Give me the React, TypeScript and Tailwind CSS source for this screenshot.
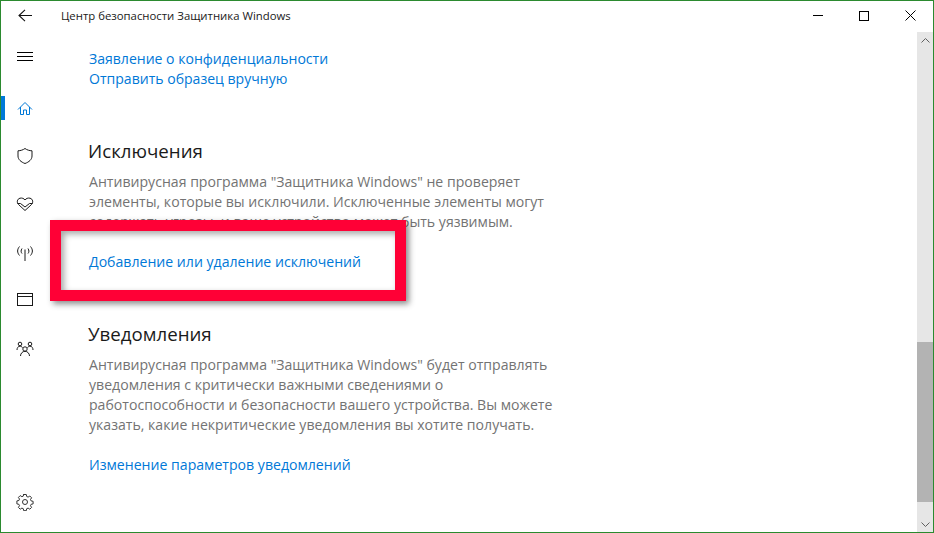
const FONT = "font-['Open_Sans','Noto_Sans',sans-serif]";

function NavIcon({ children, active }: { children: React.ReactNode; active?: boolean }) {
  return (
    <div className="relative flex h-12 w-12 items-center justify-center">
      {active && <div className="absolute left-0 top-1/2 h-[24px] w-1 -translate-y-1/2 bg-[#0078d7]" />}
      <svg
        width="18"
        height="18"
        viewBox="0 0 18 18"
        fill="none"
        stroke={active ? "#0078d7" : "#1a1a1a"}
        strokeWidth="1"
      >
        {children}
      </svg>
    </div>
  );
}

function Section({
  title,
  text,
  link,
}: {
  title: string;
  text: string[];
  link: string;
}) {
  return (
    <section>
      <h2 className="-ml-[1px] text-[18.7px] leading-[26px] text-[#1a1a1a]">{title}</h2>
      <div className="mt-[8px] text-[14.1px] leading-[20px] text-[#737373]">
        {text.map((line) => (
          <p key={line} className="whitespace-nowrap">{line}</p>
        ))}
      </div>
      <a className="mt-[20px] block whitespace-nowrap text-[14.1px] leading-[20px] text-[#0078d7]">{link}</a>
    </section>
  );
}

export default function App() {
  return (
    <div className={`${FONT} relative flex h-[533px] w-[934px] flex-col overflow-hidden border border-[#2b8a2f] bg-white`}>
      {/* Title bar */}
      <header className="flex h-[31px] shrink-0 items-center pb-[2px] text-[#1a1a1a]">
        <div className="flex w-[48px] justify-center">
          <svg width="14" height="13" viewBox="0 0 14 13" fill="none" stroke="#111" strokeWidth="1.1">
            <path d="M7 .8 1 6.5l6 5.700M1 6.500h13" />
          </svg>
        </div>
        <span className="ml-[12px] text-[11.35px]">Центр безопасности Защитника Windows</span>
        <div className="ml-auto flex items-center">
          <div className="flex w-[46px] justify-center">
            <div className="h-px w-[10px] bg-black" />
          </div>
          <div className="flex w-[46px] justify-center">
            <div className="h-[10px] w-[10px] border border-black" />
          </div>
          <div className="flex w-[46px] justify-center">
            <svg width="11" height="11" viewBox="0 0 11 11" stroke="#000" strokeWidth="1">
              <path d="m.5.5 10 10M10.500.5l-10 10" />
            </svg>
          </div>
        </div>
      </header>

      <div className="flex min-h-0 flex-1">
        {/* Navigation rail */}
        <nav className="flex w-[48px] shrink-0 flex-col">
          <div className="flex h-[48px] items-center justify-center">
            <div className="flex w-[16px] flex-col gap-[3px]">
              <div className="h-px bg-black" />
              <div className="h-px bg-black" />
              <div className="h-px bg-black" />
            </div>
          </div>
          <div className="h-[4px]" />
          <NavIcon active>
            <path d="M2 10.500 9 3.500l7 7M4.500 8v7.500h3V11h3v4.500h3V8" />
          </NavIcon>
          <NavIcon>
            <path d="M9 1.500c2 1.500 4.500 2.200 7 2.300V9c0 3.500-3 6-7 7.500C5 15 2 12.500 2 9V3.800c2.500-.1 5-.8 7-2.300Z" />
          </NavIcon>
          <NavIcon>
            <path d="M9 15.500 2.500 9.500C.5 7.500 1 4 4 3.200 6 2.700 8 3.500 9 5c1-1.500 3-2.300 5-1.800 3 .8 3.500 4.300 1.500 6.300L9 15.500Z" />
            <path d="M1.500 8.500h3L9 12l4.500-3.500h3" />
          </NavIcon>
          <NavIcon>
            <path d="M9 6.500V18M3.500 3.500c-2.500 3-2.500 6 0 9M14.500 3.500c2.500 3 2.500 6 0 9M6 5.500c-1.200 2-1.200 3.500 0 5M12 5.500c1.200 2 1.200 3.500 0 5" />
          </NavIcon>
          <NavIcon>
            <rect x="1.500" y="2.500" width="15" height="12" />
            <path d="M1.500 5.500h15" />
          </NavIcon>
          <NavIcon>
            <circle cx="9" cy="10" r="2.200" />
            <circle cx="4" cy="5" r="1.800" />
            <circle cx="14" cy="5" r="1.800" />
            <path d="M4.500 17c0-2.500 2-4.700 4.500-4.700s4.500 2.200 4.500 4.700M1 11c0-2 1-3.800 3-3.800 1 0 2 .5 2.500 1.500M17 11c0-2-1-3.800-3-3.800-1 0-2 .5-2.500 1.500" />
          </NavIcon>
          <div className="mt-auto flex h-[48px] items-center justify-center pb-[12px]">
            <svg width="18" height="18" viewBox="0 0 18 18" fill="none" stroke="#333" strokeWidth="1">
              <circle cx="9" cy="9" r="2.500" />
              <path d="M7.700 1.500h2.600l.4 2 1.400.6 1.700-1.100 1.800 1.800-1.100 1.700.6 1.400 2 .4v2.600l-2 .4-.6 1.400 1.100 1.700-1.800 1.800-1.700-1.100-1.400.6-.4 2H7.700l-.4-2-1.400-.6-1.700 1.100-1.800-1.800 1.100-1.700-.6-1.400-2-.4V7.900l2-.4.6-1.400L2.400 4.400l1.800-1.800 1.700 1.100 1.400-.6.4-2Z" />
            </svg>
          </div>
        </nav>

        {/* Scrolled page content */}
        <main className="flex min-w-0 flex-1 flex-col pl-[40px] pt-[17px]">
          <a className="whitespace-nowrap text-[14.050px] leading-[20px] text-[#0078d7]">Заявление о конфиденциальности</a>
          <a className="whitespace-nowrap text-[14.050px] leading-[20px] text-[#0078d7]">Отправить образец вручную</a>
          <div className="mt-[49px] flex flex-col gap-[49px]">
            <Section
              title="Исключения"
              text={[
                'Антивирусная программа "Защитника Windows" не проверяет',
                "элементы, которые вы исключили. Исключенные элементы могут",
                "содержать угрозы, и ваше устройство может быть уязвимым.",
              ]}
              link="Добавление или удаление исключений"
            />
            <Section
              title="Уведомления"
              text={[
                'Антивирусная программа "Защитника Windows" будет отправлять',
                "уведомления с критически важными сведениями о",
                "работоспособности и безопасности вашего устройства. Вы можете",
                "указать, какие некритические уведомления вы хотите получать.",
              ]}
              link="Изменение параметров уведомлений"
            />
          </div>
        </main>

        {/* Scrollbar */}
        <div className="flex w-[16px] shrink-0 flex-col bg-[#e6e6e6]">
          <div className="flex h-[16px] items-center justify-center">
            <svg width="9" height="5" viewBox="0 0 9 5" fill="none" stroke="#606060">
              <path d="m.5 4.500 4-4 4 4" />
            </svg>
          </div>
          <div className="h-[294px]" />
          <div className="h-[160px] bg-[#b3b3b3]" />
          <div className="mt-auto flex h-[16px] items-center justify-center">
            <svg width="9" height="5" viewBox="0 0 9 5" fill="none" stroke="#606060">
              <path d="m.5.5 4 4 4-4" />
            </svg>
          </div>
        </div>
      </div>

      {/* Red annotation frame over the page */}
      <div className="absolute left-[49px] top-[219px] h-[81px] w-[356px] border-[11px] border-[#ff0036] shadow-[3px_3px_6px_rgba(0,0,0,0.45),inset_3px_3px_6px_rgba(0,0,0,0.35)]" />
    </div>
  );
}
